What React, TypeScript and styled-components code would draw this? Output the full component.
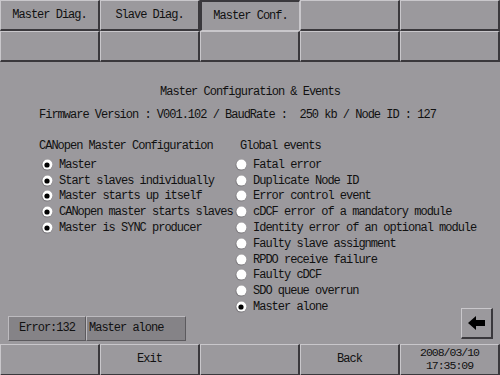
import React from 'react'
import styled, { createGlobalStyle, css } from 'styled-components'

const GlobalStyle = createGlobalStyle`
  html, body {
    margin: 0;
    padding: 0;
    background: #9b999d;
  }
`

const Screen = styled.div`
  display: flex;
  flex-direction: column;
  width: 500px;
  height: 375px;
  overflow: hidden;
  background: #9b999d;
  color: #111;
  font-family: "Liberation Mono", "DejaVu Sans Mono", monospace;
  font-size: 12px;
  letter-spacing: -1px;
`

const KeyGrid = styled.div<{ $rowHeight: number }>`
  display: grid;
  grid-template-columns: repeat(5, 100px);
  grid-auto-rows: ${({ $rowHeight }) => $rowHeight}px;
`

const Key = styled.div<{ $pressed?: boolean }>`
  ${({ $pressed }) => css`
    display: flex;
    flex-direction: column;
    align-items: center;
    justify-content: center;
    box-sizing: border-box;
    background: #9b999d;
    line-height: 13px;
    border-style: solid;
    border-color: ${$pressed
      ? '#3a383c #c9c7cb #c9c7cb #3a383c'
      : '#c9c7cb #3a383c #3a383c #c9c7cb'};
    border-width: ${$pressed ? '2px 1px 1px 2px' : '1px 2px 2px 1px'};
    padding-top: ${$pressed ? '1px' : '0'};
  `}
`

const DateLine = styled.span`
  font-size: 11.5px;
  line-height: 13px;
`

const Main = styled.div`
  flex: 1;
  display: flex;
  flex-direction: column;
  padding-top: 22px;
`

const Title = styled.div`
  text-align: center;
  line-height: 16px;
  white-space: pre;
`

const Firmware = styled.div`
  margin-top: 7px;
  padding-left: 39px;
  line-height: 16px;
  white-space: pre;
`

const Columns = styled.div`
  display: grid;
  grid-template-columns: 196px 1fr;
  margin-top: 15px;
  padding-left: 39px;
`

const Column = styled.div<{ $headerIndent: number; $rowIndent: number }>`
  display: flex;
  flex-direction: column;
  h3 {
    margin: 0 0 3px ${({ $headerIndent }) => $headerIndent}px;
    font-size: 12px;
    font-weight: normal;
    line-height: 16px;
    white-space: pre;
  }
  ul {
    margin: 0;
    padding: 0 0 0 ${({ $rowIndent }) => $rowIndent}px;
    list-style: none;
  }
`

const Option = styled.li`
  display: flex;
  align-items: center;
  gap: 6px;
  height: 15.8px;
  white-space: pre;
`

const StatusRow = styled.div`
  display: flex;
  align-items: flex-end;
  justify-content: space-between;
  margin-top: -7px;
  padding: 0 7px 3px 8px;
`

const StatusGroup = styled.div`
  display: flex;
`

const StatusBox = styled.div<{ $width: number; $align: 'center' | 'flex-start' }>`
  display: flex;
  align-items: center;
  justify-content: ${({ $align }) => $align};
  box-sizing: border-box;
  width: ${({ $width }) => $width}px;
  height: 25px;
  padding: 0 2px;
  background: #858387;
  border: 1px solid;
  border-color: #bdbbbf #5c5a5e #5c5a5e #bdbbbf;
  white-space: pre;
`

const ArrowKey = styled.div`
  display: flex;
  align-items: center;
  justify-content: center;
  box-sizing: border-box;
  width: 32px;
  height: 31px;
  margin-bottom: 2px;
  background: #9b999d;
  border-style: solid;
  border-width: 1px 2px 2px 1px;
  border-color: #c9c7cb #3a383c #3a383c #c9c7cb;
`

const Radio = ({ checked }: { checked: boolean }) => (
  <svg width="12" height="12" viewBox="0 0 12 12">
    <circle cx="6" cy="6" r="5.5" fill="#7a787c" />
    <circle cx="6.4" cy="5.6" r="5" fill="#fff" />
    {checked && <circle cx="6" cy="6" r="2.6" fill="#000" />}
  </svg>
)

const ArrowLeft = () => (
  <svg width="17" height="14" viewBox="0 0 17 14">
    <polygon points="0,7 8,0 8,4 17,4 17,10 8,10 8,14" fill="#000" />
  </svg>
)

const masterOptions = [
  'Master',
  'Start slaves individually',
  'Master starts up itself',
  'CANopen master starts slaves',
  'Master is SYNC producer',
]

const globalEvents = [
  'Fatal error',
  'Duplicate Node ID',
  'Error control event',
  'cDCF error of a mandatory module',
  'Identity error of an optional module',
  'Faulty slave assignment',
  'RPDO receive failure',
  'Faulty cDCF',
  'SDO queue overrun',
  'Master alone',
]

const topKeys = ['Master Diag.', 'Slave Diag.', 'Master Conf.', '', '', '', '', '', '', '']

export default function App() {
  return (
    <Screen>
      <GlobalStyle />
      <KeyGrid $rowHeight={31}>
        {topKeys.map((label, i) => (
          <Key key={i} $pressed={i === 2}>
            {label}
          </Key>
        ))}
      </KeyGrid>

      <Main>
        <Title>Master Configuration &amp; Events</Title>
        <Firmware>Firmware Version : V001.102 / BaudRate :  250 kb / Node ID : 127</Firmware>

        <Columns>
          <Column $headerIndent={0} $rowIndent={2}>
            <h3>CANopen Master Configuration</h3>
            <ul>
              {masterOptions.map((label) => (
                <Option key={label}>
                  <Radio checked />
                  {label}
                </Option>
              ))}
            </ul>
          </Column>
          <Column $headerIndent={5} $rowIndent={0}>
            <h3>Global events</h3>
            <ul>
              {globalEvents.map((label) => (
                <Option key={label}>
                  <Radio checked={label === 'Master alone'} />
                  {label}
                </Option>
              ))}
            </ul>
          </Column>
        </Columns>

        <StatusRow>
          <StatusGroup>
            <StatusBox $width={78} $align="center">Error:132</StatusBox>
            <StatusBox $width={100} $align="flex-start">Master alone</StatusBox>
          </StatusGroup>
          <ArrowKey>
            <ArrowLeft />
          </ArrowKey>
        </StatusRow>
      </Main>

      <KeyGrid $rowHeight={32}>
        <Key />
        <Key>Exit</Key>
        <Key />
        <Key>Back</Key>
        <Key>
          <DateLine>2008/03/10</DateLine>
          <DateLine>17:35:09</DateLine>
        </Key>
      </KeyGrid>
    </Screen>
  )
}
